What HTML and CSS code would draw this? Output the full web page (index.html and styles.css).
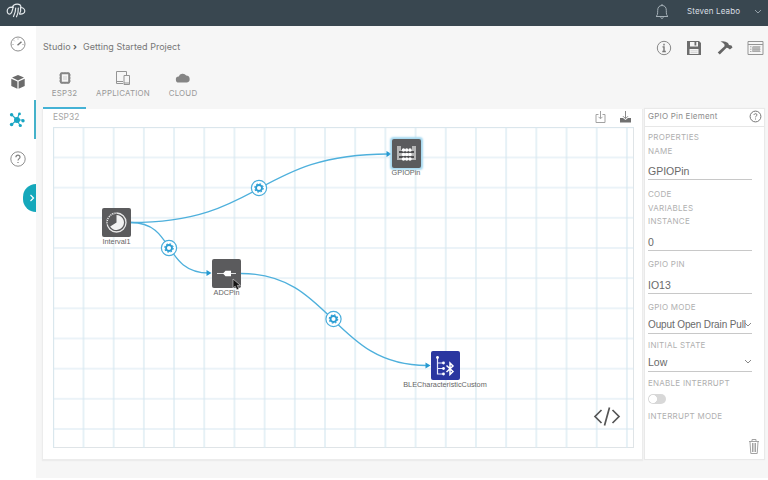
FILE: index.html
```html
<!DOCTYPE html>
<html lang="en">
<head>
<meta charset="utf-8">
<title>Studio</title>
<link rel="stylesheet" href="styles.css">
</head>
<body>
<header class="topbar">
  <svg class="logo" width="20" height="16" viewBox="0 0 20 16"><g fill="none" stroke="#e3e8eb" stroke-width="1.200" stroke-linecap="round"><path d="M4.500 10.800C6.500 10 6 6 7.500 4M6.500 4.200C3 3.800 1.200 5.800 1.200 8c0 3 2 3.500 3.300 2.800M6 4.500C8 0 14.500 0 15 4M7.500 13.500Q9.700 9 9.700 5M10.500 13.800Q12.500 10 12.300 5M13.500 11Q15.300 8 14.500 4.500M14.500 4.500c2.200-.2 4.300 1.300 4.300 3.500 0 2.500-2.500 3.400-5.300 3"/></g></svg>
  <div class="account">
    <svg width="14" height="17" viewBox="0 0 14 17"><path d="M1 13.500h12c-1.500-1-1.700-2.500-1.700-6C11.300 4.500 10 2.500 7 2.500S2.700 4.500 2.700 7.500c0 3.500-.2 5-1.700 6zM7 2.500V1M5.500 14.500Q7 16.500 8.500 14.500" fill="none" stroke="#a5b0b7"/></svg>
    <span class="user">Steven Leabo</span>
    <svg width="8" height="6" viewBox="0 0 8 6"><path d="M1 1l3 3 3-3" fill="none" stroke="#94a0a8"/></svg>
  </div>
</header>
<div class="shell">
  <nav class="rail">
    <a class="rail-item"><svg width="16" height="16" viewBox="0 0 16 16"><circle cx="8" cy="8" r="7" fill="none" stroke="#8f8f8f"/><path d="M7.500 9.200L11.500 5.800" stroke="#777" stroke-width="1.500"/><path d="M2.500 8.500h1M12.500 8.500h1M8 2.500v1M4 4.500l.7.700" stroke="#999"/></svg></a>
    <a class="rail-item"><svg width="16" height="16" viewBox="0 0 16 16"><path d="M8 1l6 2.600L8 6.400 2 3.600zM1.300 4.700L7.400 7.500v7.300L1.300 11.900zM14.700 4.700L8.600 7.500v7.300l6.100-2.900z" fill="#6b6b6b"/></svg></a>
    <a class="rail-item active"><svg width="16" height="16" viewBox="0 0 16 16"><path d="M8 8L2.500 2.500M8 8l2-6M8 8h6M8 8l-5.500 4.500M8 8l3 5.500" stroke="#22a9c6" stroke-width="1.100"/><g fill="#18a5c3"><circle cx="8" cy="8" r="3"/><circle cx="2.600" cy="2.700" r="1.700"/><circle cx="10.500" cy="1.900" r="1.400"/><circle cx="14" cy="8.800" r="1.700"/><circle cx="2.600" cy="12.500" r="1.800"/><circle cx="11.300" cy="13.500" r="1.600"/></g></svg></a>
    <a class="rail-item"><svg width="16" height="16" viewBox="0 0 16 16"><circle cx="8" cy="8" r="7.200" fill="none" stroke="#8f8f8f"/><path d="M5.900 6.300C6 3.400 10.100 3.600 10 6.200 9.900 7.600 8 7.700 8 9.500M8 10.900v1.200" fill="none" stroke="#808080" stroke-width="1.200"/></svg></a>
    <button class="drawer"><svg width="6" height="8" viewBox="0 0 6 8"><path d="M1.500 1l3 3-3 3" fill="none" stroke="#fff" stroke-width="1.200"/></svg></button>
  </nav>
  <main class="page">
    <div class="heading">
      <div class="crumbs"><span class="root">Studio</span><b>›</b><span class="project">Getting Started Project</span></div>
      <div class="tools">
        <svg width="16" height="16" viewBox="0 0 16 16"><circle cx="8" cy="8" r="6.700" fill="none" stroke="#888"/><path d="M8 3.800v1.600M6.500 6.900H8v4.600M6.300 11.500h3.500" fill="none" stroke="#777" stroke-width="1.400"/></svg>
        <svg width="16" height="16" viewBox="0 0 16 16"><path fill-rule="evenodd" d="M1 1h12l2 2v12H1zM4 2v4.500h8V2zM3.500 9v5h9V9z" fill="#6d6d6d"/><path d="M8.500 2h1.800v3.500H8.500z" fill="#6d6d6d"/><path d="M4.500 10.800h7M4.500 12.600h7" stroke="#ccc" stroke-width=".8"/></svg>
        <svg width="16" height="16" viewBox="0 0 16 16"><path d="M3.500 1.500Q7.500 .3 11 3l1 2 2.500.4 1 2.200-2.600 2-2-1.700-1.300-.1-6.800 6.700L.7 12.500 7.500 6.300V4.500Q6.200 2.300 3.500 1.500z" fill="#656565"/></svg>
        <svg width="17" height="16" viewBox="0 0 17 16"><path d="M1 1.500h15v13H1zM1 4.500h15" fill="none" stroke="#959595"/><path d="M5 6.500h8v5.500H5z" fill="#bcbcbc"/><path d="M3 6.800h1.500M6 6.800h7.500M3 9.200h1.500M6 9.200h7.500M3 11.500h1.500M6 11.500h7.500" stroke="#aaa"/></svg>
      </div>
    </div>
    <div class="tabs">
      <div class="tab esp selected"><svg width="14" height="14" viewBox="0 0 14 14"><path d="M4 1v2m3-2v2m3-2v2M4 11v2m3-2v2m3-2v2M1 4h2M1 7h2m-2 3h2m8-6h2m-2 3h2m-2 3h2" stroke="#b4b4b4"/><rect x="2.800" y="2.300" width="8.400" height="9.400" rx="1" fill="none" stroke="#858585" stroke-width="2"/><rect x="5" y="5" width="4" height="4" fill="#e2e2e2"/></svg><span>ESP32</span></div>
      <div class="tab app"><svg width="16" height="16" viewBox="0 0 16 16"><path d="M1.500 13.500v-12h10v4M1.500 13.500h6.500M1.500 11.500h6.500M9 5.500h5.500v9H9zM9 13h5.500" fill="none" stroke="#949494"/></svg><span>APPLICATION</span></div>
      <div class="tab cld"><svg width="16" height="14" viewBox="0 0 16 14"><path d="M4 11.500a3 3 0 0 1-.3-6A4.200 4.200 0 0 1 11.200 4.600 3.500 3.500 0 0 1 12 11.500z" fill="#858585"/></svg><span>CLOUD</span></div>
    </div>
    <div class="work">
      <section class="editor">
        <div class="editor-head"><span>ESP32</span>
          <div class="transfer">
            <svg width="13" height="14" viewBox="0 0 13 14"><path d="M4.500 4.500H2v8h9v-8H8.500M6.500 1v7.500M4.500 6.800l2 2 2-2" fill="none" stroke="#a2a2a2"/></svg>
            <svg width="13" height="14" viewBox="0 0 13 14"><path d="M1 8h3l2.500 2L9 8h3v4.500H1z" fill="#707070"/><path d="M6.500 1v7.500M4 6.200l2.500 2.500L9 6.200" fill="none" stroke="#888"/></svg>
          </div>
        </div>
        <div class="canvas">
          <svg class="wires" width="581" height="321" viewBox="53 127 581 321">
            <defs>
              <pattern id="grid" x="53.300" y="127.300" width="30.190" height="30.170" patternUnits="userSpaceOnUse"><path d="M30.190 0V30.170M0 30.170H30.190M0 0V30.170M0 0H30.190" stroke="#d7e8f1" stroke-width="1.200"/></pattern>
              <g id="gear"><circle r="7.600" fill="#fff" stroke="#4aaddb" stroke-width="1.200"/><circle r="3" fill="none" stroke="#2b9dd3" stroke-width="1.900"/><circle r="4.200" fill="none" stroke="#2b9dd3" stroke-width="1.100" stroke-dasharray="1.650 1.650"/></g>
            </defs>
            <rect x="53" y="127" width="581" height="321" fill="url(#grid)"/>
            <g fill="none" stroke="#4eb0dc" stroke-width="1.300"><path d="M131 222.500C262 222.500 257 154 388 154"/><path d="M131 222.500C175 222.500 163 273 209 273"/><path d="M241 273.500C332 273.500 333 365.500 427 365.500"/></g>
            <g fill="#2499d1"><path d="M386.500 151l5 3-5 3zM206.500 270l5 3-5 3zM425.500 362.500l5 3-5 3z"/></g>
            <use href="#gear" x="259" y="188"/><use href="#gear" x="169" y="248"/><use href="#gear" x="333.500" y="319"/>
          </svg>
          <div class="node interval"><svg width="29" height="29" viewBox="0 0 29 29"><circle cx="14.500" cy="14.500" r="9.500" fill="none" stroke="#e8e8e8" stroke-width="1.300"/><path d="M14.500 5a9.500 9.500 0 0 0-9 12" fill="none" stroke="#5b5b5d" stroke-width="1.500" stroke-dasharray="1 1.200"/><path d="M14.500 14.500V7a7.500 7.500 0 1 1-6.300 11.600z" fill="#f2f2f2"/></svg><span>Interval1</span></div>
          <div class="node adc"><svg width="29" height="29" viewBox="0 0 29 29"><path d="M5 14.500h19" stroke="#ddd"/><path d="M11 14.500l2.500-2.700h5.500v5.400h-5.500z" fill="#fff"/></svg><span>ADCPin</span></div>
          <div class="node gpio"><svg width="29" height="29" viewBox="0 0 29 29"><path d="M5 7h4v4h11V7h4v14H5z" fill="#b6b6b6"/><path d="M7 13h15M7 18h15" stroke="#4e4e50" stroke-width="2"/><g fill="#fff"><circle cx="11.500" cy="11" r="1.700"/><circle cx="14.700" cy="11" r="1.700"/><circle cx="18" cy="11" r="1.700"/><circle cx="11.500" cy="15.500" r="1.700"/><circle cx="14.700" cy="15.500" r="1.700"/><circle cx="18" cy="15.500" r="1.700"/><circle cx="11.500" cy="20" r="1.700"/><circle cx="14.700" cy="20" r="1.700"/><circle cx="18" cy="20" r="1.700"/></g></svg><span>GPIOPin</span></div>
          <div class="node ble"><svg width="29" height="29" viewBox="0 0 29 29"><path d="M6.500 6v17h6M6.500 12h6M6.500 17.500h6" fill="none" stroke="#e7e9ff" stroke-width="1.200"/><g fill="#fff"><circle cx="6.500" cy="6.500" r="1.400"/><circle cx="12.500" cy="12" r="1.400"/><circle cx="12.500" cy="17.500" r="1.400"/><circle cx="12.500" cy="23" r="1.400"/></g><path d="M15.500 14.500l6.500 6-3 3V12l3 3-6.500 6" fill="none" stroke="#fff" stroke-width="1.500"/></svg><span>BLECharacteristicCustom</span></div>
          <svg class="cursor" width="10" height="13" viewBox="0 0 10 13"><path d="M1 1v9l2.200-1.800 1.700 3.600 2-.9-1.600-3.500H8.500z" fill="#151515" stroke="#ddd" stroke-width=".6"/></svg>
          <svg class="code" width="28" height="21" viewBox="0 0 28 21"><path d="M8.500 4L2 10.500 8.500 17M19.500 4l6.500 6.500L19.500 17M16.500 1.500l-5 18" fill="none" stroke="#555" stroke-width="1.700"/></svg>
        </div>
      </section>
      <aside class="inspector">
        <div class="inspector-head"><span>GPIO Pin Element</span><svg width="13" height="13" viewBox="0 0 13 13"><circle cx="6.500" cy="6.500" r="5.400" fill="none" stroke="#777"/><path d="M5 5c.1-1.800 3.100-1.700 3 0C8 6 6.500 6 6.500 7.300M6.500 8.500v1" fill="none" stroke="#777"/></svg></div>
        <div class="form">
          <div class="label properties">PROPERTIES</div>
          <div class="label name">NAME</div>
          <div class="value first">GPIOPin</div>
          <div class="label codes">CODE</div>
          <div class="label variables">VARIABLES</div>
          <div class="label instance">INSTANCE</div>
          <div class="value zero">0</div>
          <div class="label pin">GPIO PIN</div>
          <div class="value io">IO13</div>
          <div class="label mode">GPIO MODE</div>
          <div class="value select drain"><span>Ouput Open Drain Pull</span><svg width="8" height="6" viewBox="0 0 8 6"><path d="M1 1l3 3 3-3" fill="none" stroke="#888"/></svg></div>
          <div class="label state">INITIAL STATE</div>
          <div class="value select low"><span>Low</span><svg width="8" height="6" viewBox="0 0 8 6"><path d="M1 1l3 3 3-3" fill="none" stroke="#888"/></svg></div>
          <div class="label enable">ENABLE INTERRUPT</div>
          <div class="switch"></div>
          <div class="label interrupt">INTERRUPT MODE</div>
        </div>
        <svg class="trash" width="12" height="17" viewBox="0 0 12 17"><path d="M1 3.500h10M4 3.500V1.500h4v2M2 4l.8 11.500h6.400L10 4M4.500 5v9M6 5v9M7.500 5v9" fill="none" stroke="#a3a3a3"/></svg>
      </aside>
    </div>
  </main>
</div>
</body>
</html>
```
FILE: styles.css
```css
* { box-sizing: border-box; }
body { margin: 0; width: 768px; height: 480px; overflow: hidden; background: #fff; font-family: Inter, "Open Sans", sans-serif; color: #777; }
svg { display: block; flex: none; }
.topbar { height: 26px; background: #394750; display: flex; justify-content: space-between; padding: 3px 6px 0 6px; }
.account { display: flex; align-items: flex-start; }
.user { width: 67px; margin-left: 18px; font-size: 8px; letter-spacing: .13px; line-height: 16px; color: #d8dee2; white-space: nowrap; }
.account svg:last-child { margin-top: 6px; }
.shell { display: flex; height: 452px; }
.rail { width: 36px; background: #fff; position: relative; display: flex; flex-direction: column; }
.rail-item { height: 39px; padding: 10px 0 0 10px; }
.rail-item:first-child { height: 36px; }
.rail-item.active { border-right: 2px solid #45b2ca; padding-left: 9px; padding-top: 12px; }
.rail-item:nth-child(2) { padding-top: 12px; height: 38px; }
.rail-item:nth-child(4) { padding-top: 12px; padding-left: 10px; }
.drawer { position: absolute; left: 23px; top: 158px; width: 13px; height: 28px; border: 0; border-radius: 14px 0 0 14px; background: #15a8bb; padding: 0 0 0 6px; }
.page { flex: 1; min-width: 0; background: #f6f6f6; padding: 12px 3px 0 7px; }
.heading { display: flex; justify-content: space-between; height: 30px; padding-right: 1px; }
.crumbs { display: flex; font-size: 9px; line-height: 17px; white-space: nowrap; }
.crumbs b { width: 10px; margin-left: 3px; color: #555; }
.root { width: 27px; letter-spacing: .1px; }
.project { letter-spacing: .03px; }
.tools { display: flex; gap: 14.500px; padding-top: 2px; }
.tabs { height: 41px; display: flex; }
.tab { display: flex; flex-direction: column; align-items: center; font-size: 7.900px; letter-spacing: .2px; line-height: 10px; color: #999; padding-top: 1.500px; }
.tab svg { height: 16px; margin-bottom: 2.500px; }
.tab.selected { box-shadow: inset 0 -2px #45b2d5; }
.esp { width: 43px; }
.app { width: 74px; }
.cld { width: 46px; }
.work { display: flex; gap: 3px; height: 350px; }
.editor { width: 599px; background: #fff; box-shadow: 0 1px 1px 1px #ececec; clip-path: inset(0 -2px -3px -2px); padding-left: 10px; }
.editor-head { height: 18px; display: flex; justify-content: space-between; font-size: 8.400px; letter-spacing: .1px; line-height: 16px; color: #a5a5a5; padding-right: 10px; }
.transfer { display: flex; gap: 12px; padding-top: 1px; }
.canvas { position: relative; width: 581px; height: 321px; border: 1px solid #dfe4e7; }
.wires { margin: -1px; }
.node { position: absolute; width: 100px; display: flex; flex-direction: column; align-items: center; font: 7.300px/9px "Liberation Sans", sans-serif; color: #666; white-space: nowrap; }
.node svg { background: #5b5b5d; border-radius: 2px; }
.interval { left: 12.500px; top: 80px; }
.adc { left: 122.500px; top: 131px; }
.gpio { left: 302px; top: 11px; }
.gpio svg { box-shadow: 0 0 2px 1.500px #a7d9f0; }
.ble { left: 341px; top: 223px; }
.ble svg { background: #2a36a0; }
.cursor { position: absolute; left: 178px; top: 150px; }
.code { position: absolute; left: 539px; top: 278px; }
.inspector { position: relative; width: 119px; background: #fff; box-shadow: 0 0 1px 1px #e9e9e9; }
.inspector-head { height: 18px; border-bottom: 1px solid #e7e7e7; padding: 1px 3px 0; display: flex; justify-content: space-between; font-size: 8px; letter-spacing: .22px; line-height: 13px; color: #8c8c8c; white-space: nowrap; }
.inspector-head svg { margin: 0 -1px 0 0; }
.form { padding: 5px 12px 0 3px; }
.label { font-size: 8px; letter-spacing: .25px; line-height: 10px; height: 10px; color: #b0b0b0; white-space: nowrap; }
.name { margin-top: 3.500px; }
.value { height: 18px; font: 10.500px/18px "Liberation Sans", sans-serif; color: #6a6a6a; border-bottom: 1px solid #c8c8c8; white-space: nowrap; }
.first { margin-top: 6.500px; }
.codes { margin-top: 9px; }
.variables, .instance { margin-top: 3.700px; }
.zero { margin-top: 6.500px; }
.pin { margin-top: 8.500px; }
.io { margin-top: 6.500px; }
.mode { margin-top: 8.500px; }
.drain { margin-top: 4px; }
.drain span { font-size: 10px; letter-spacing: -.13px; }
.state { margin-top: 6px; }
.low { margin-top: 3.500px; }
.enable { margin-top: 6.500px; }
.select { display: flex; justify-content: space-between; align-items: center; }
.select span { width: 96px; }
.switch { width: 18px; height: 10px; margin-top: 6px; border-radius: 5px; background: radial-gradient(circle at 5px 5px, #fff 0 3.700px, #d8d8d8 4.300px); }
.interrupt { margin-top: 7px; }
.trash { position: absolute; right: 4px; bottom: 4px; }
```
